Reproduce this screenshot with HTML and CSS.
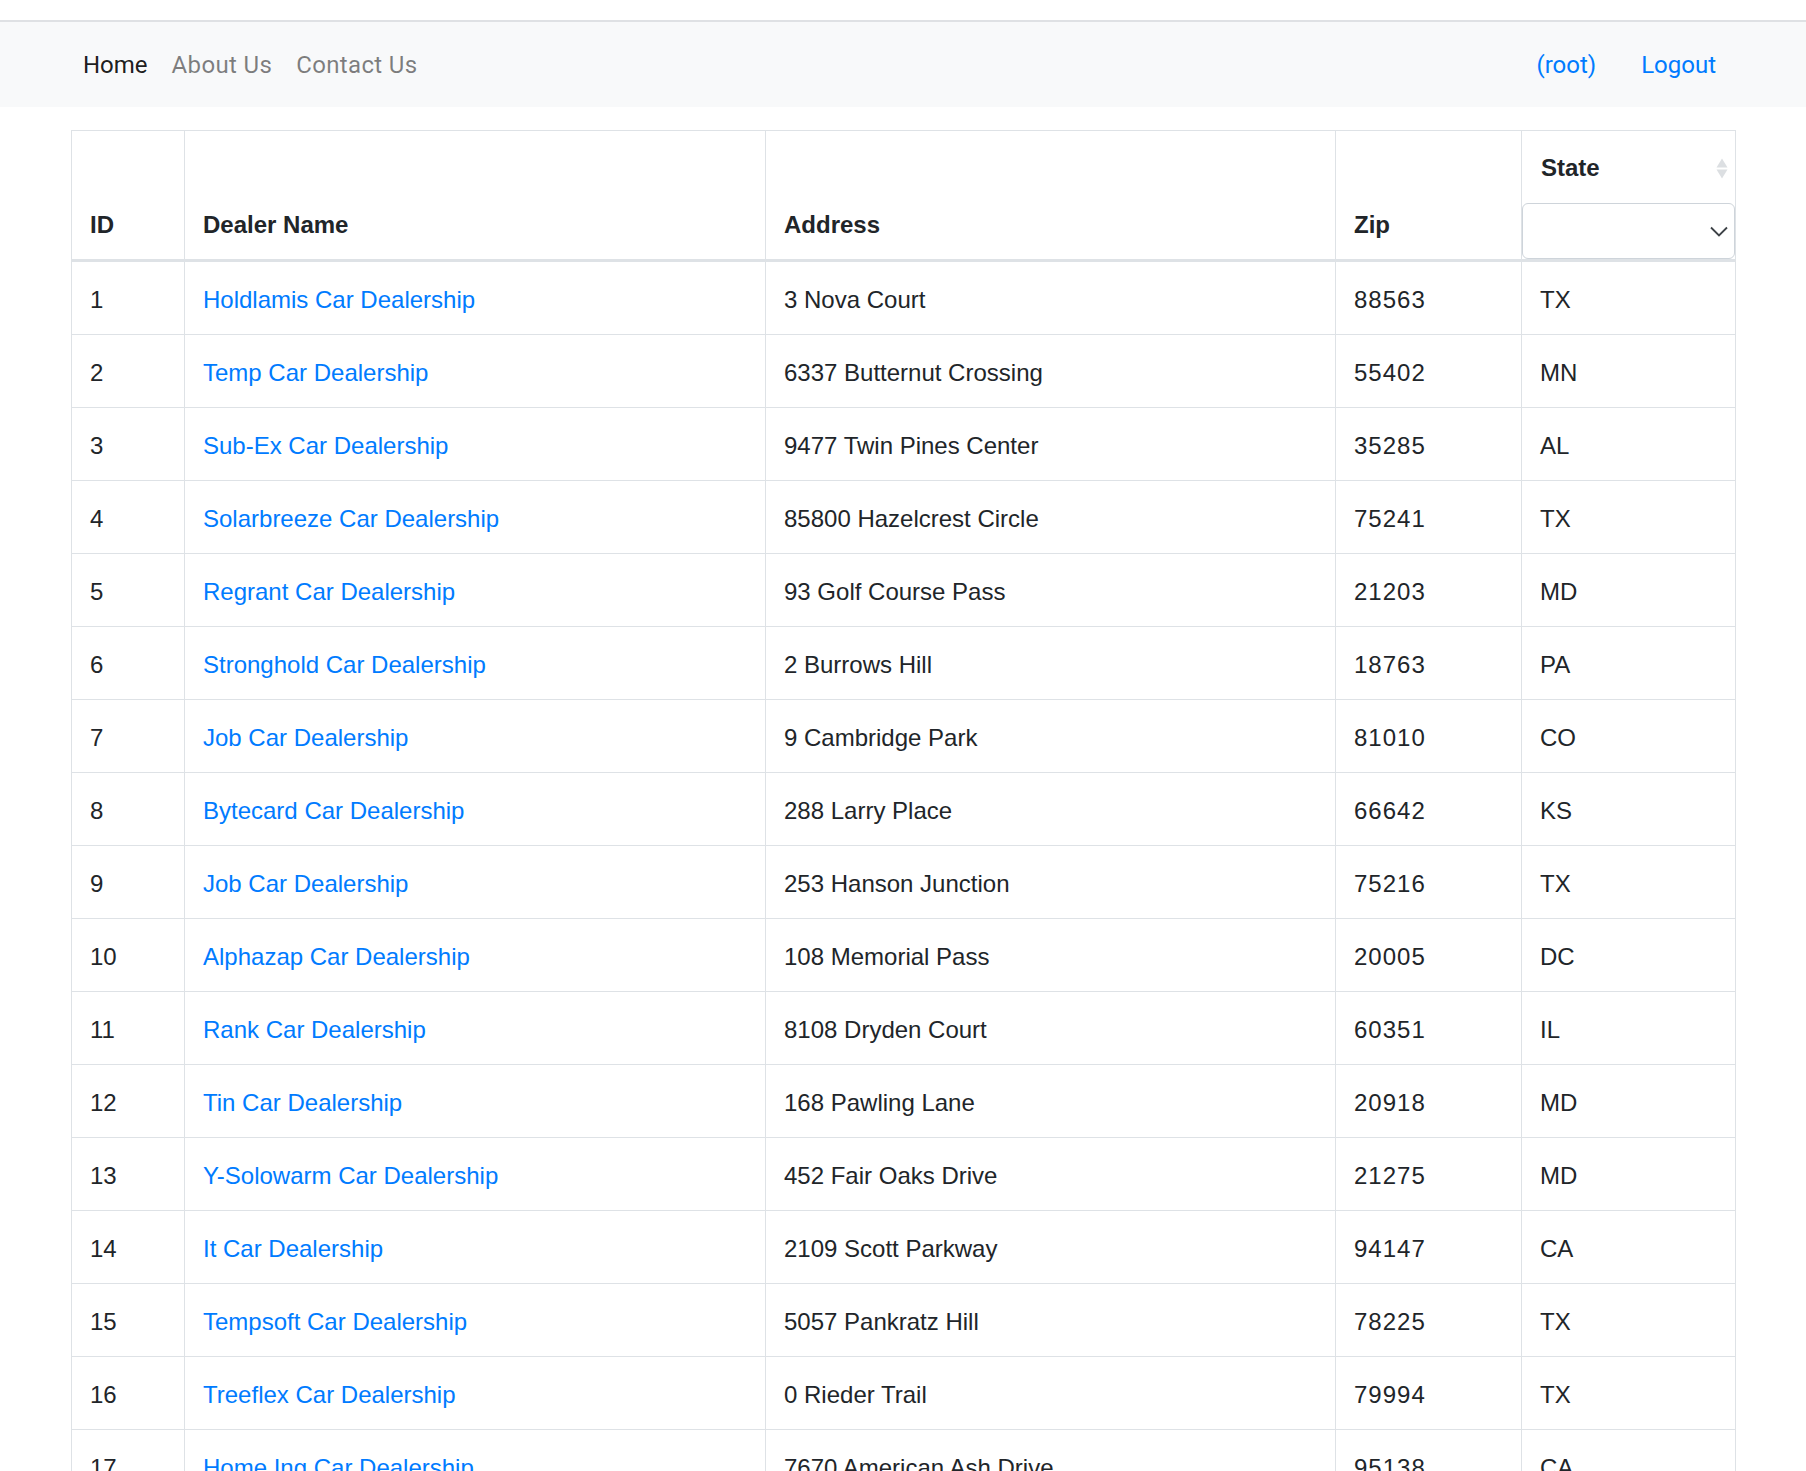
FILE: index.html
```html
<!DOCTYPE html>
<html lang="en">
<head>
<meta charset="utf-8">
<title>Dealerships</title>
<link rel="stylesheet" href="styles.css">
</head>
<body>
<div class="topstrip"></div>
<nav class="navbar">
  <ul class="nav-left">
    <li><a class="nav-link active" href="#">Home</a></li>
    <li><a class="nav-link" href="#">About Us</a></li>
    <li><a class="nav-link" href="#">Contact Us</a></li>
  </ul>
  <div class="nav-right">
    <a class="user-link" href="#">(root)</a>
    <a class="logout-link" href="#">Logout</a>
  </div>
</nav>
<main class="content">
  <table class="dealers">
    <colgroup>
      <col class="c-id"><col class="c-name"><col class="c-addr"><col class="c-zip"><col class="c-state">
    </colgroup>
    <thead>
      <tr>
        <th>ID</th>
        <th>Dealer Name</th>
        <th>Address</th>
        <th>Zip</th>
        <th class="state-th">
          <div class="state-label">
            <span>State</span>
            <svg class="sort-icon" width="12" height="21" viewBox="0 0 12 21"><path d="M6 0.5 L11.5 9.5 L0.5 9.5 Z" fill="#dcdfe2"/><path d="M6 20.5 L11.5 11.5 L0.5 11.5 Z" fill="#dcdfe2"/></svg>
          </div>
          <div class="select-wrap">
            <select class="state-select" aria-label="State filter"><option value=""></option></select>
            <svg class="chevron" width="18" height="11" viewBox="0 0 18 11"><path d="M1 1.5 L9 9.5 L17 1.5" fill="none" stroke="#3d4247" stroke-width="1.8"/></svg>
          </div>
        </th>
      </tr>
    </thead>
    <tbody>
      <tr><td>1</td><td><a href="#">Holdlamis Car Dealership</a></td><td>3 Nova Court</td><td class="num">88563</td><td>TX</td></tr>
      <tr><td>2</td><td><a href="#">Temp Car Dealership</a></td><td>6337 Butternut Crossing</td><td class="num">55402</td><td>MN</td></tr>
      <tr><td>3</td><td><a href="#">Sub-Ex Car Dealership</a></td><td>9477 Twin Pines Center</td><td class="num">35285</td><td>AL</td></tr>
      <tr><td>4</td><td><a href="#">Solarbreeze Car Dealership</a></td><td>85800 Hazelcrest Circle</td><td class="num">75241</td><td>TX</td></tr>
      <tr><td>5</td><td><a href="#">Regrant Car Dealership</a></td><td>93 Golf Course Pass</td><td class="num">21203</td><td>MD</td></tr>
      <tr><td>6</td><td><a href="#">Stronghold Car Dealership</a></td><td>2 Burrows Hill</td><td class="num">18763</td><td>PA</td></tr>
      <tr><td>7</td><td><a href="#">Job Car Dealership</a></td><td>9 Cambridge Park</td><td class="num">81010</td><td>CO</td></tr>
      <tr><td>8</td><td><a href="#">Bytecard Car Dealership</a></td><td>288 Larry Place</td><td class="num">66642</td><td>KS</td></tr>
      <tr><td>9</td><td><a href="#">Job Car Dealership</a></td><td>253 Hanson Junction</td><td class="num">75216</td><td>TX</td></tr>
      <tr><td>10</td><td><a href="#">Alphazap Car Dealership</a></td><td>108 Memorial Pass</td><td class="num">20005</td><td>DC</td></tr>
      <tr><td>11</td><td><a href="#">Rank Car Dealership</a></td><td>8108 Dryden Court</td><td class="num">60351</td><td>IL</td></tr>
      <tr><td>12</td><td><a href="#">Tin Car Dealership</a></td><td>168 Pawling Lane</td><td class="num">20918</td><td>MD</td></tr>
      <tr><td>13</td><td><a href="#">Y-Solowarm Car Dealership</a></td><td>452 Fair Oaks Drive</td><td class="num">21275</td><td>MD</td></tr>
      <tr><td>14</td><td><a href="#">It Car Dealership</a></td><td>2109 Scott Parkway</td><td class="num">94147</td><td>CA</td></tr>
      <tr><td>15</td><td><a href="#">Tempsoft Car Dealership</a></td><td>5057 Pankratz Hill</td><td class="num">78225</td><td>TX</td></tr>
      <tr><td>16</td><td><a href="#">Treeflex Car Dealership</a></td><td>0 Rieder Trail</td><td class="num">79994</td><td>TX</td></tr>
      <tr><td>17</td><td><a href="#">Home Ing Car Dealership</a></td><td>7670 American Ash Drive</td><td class="num">95138</td><td>CA</td></tr>
    </tbody>
  </table>
</main>
</body>
</html>
```
FILE: styles.css
```css
* { box-sizing: border-box; }
html, body { margin: 0; padding: 0; background: #ffffff; }
body {
  font-family: "Liberation Sans", Arial, sans-serif;
  font-size: 24px;
  line-height: 36px;
  color: #212529;
}
.topstrip {
  height: 22px;
  border-bottom: 2px solid #dfe1e4;
  background: #ffffff;
}
.navbar {
  height: 85px;
  background: #f8f9fa;
  display: flex;
  align-items: center;
  justify-content: space-between;
  padding: 1px 78px 0 71px;
  font-family: Roboto, "Liberation Sans", sans-serif;
}
.nav-left {
  display: flex;
  list-style: none;
  margin: 0;
  padding: 0;
}
.nav-link {
  display: block;
  padding: 12px 12px;
  color: rgba(0, 0, 0, 0.5);
  text-decoration: none;
  letter-spacing: 0.35px;
}
.nav-link.active { color: rgba(0, 0, 0, 0.9); letter-spacing: 0; }
.nav-right { display: flex; align-items: center; }
.user-link, .logout-link {
  color: #007bff;
  text-decoration: none;
  padding: 12px 12px;
}
.user-link { margin-right: 21px; }
.content { padding: 23px 71px 0 71px; }
.dealers {
  width: 1664px;
  border-collapse: collapse;
  table-layout: fixed;
  border: 1px solid #dee2e6;
}
.c-id { width: 113px; }
.c-name { width: 581px; }
.c-addr { width: 570px; }
.c-zip { width: 186px; }
.c-state { width: 214px; }
.dealers th, .dealers td {
  border: 1px solid #dee2e6;
  padding: 20px 18px 16px 18px;
  text-align: left;
  white-space: nowrap;
}
.dealers th {
  vertical-align: bottom;
  font-weight: bold;
  border-bottom: 3px solid #dee2e6;
}
.dealers td { vertical-align: top; }
.dealers td.num { letter-spacing: 1px; }
.dealers a { color: #007bff; text-decoration: none; }
.dealers th.state-th { padding: 19px 0 0 0; }
.state-label {
  display: flex;
  align-items: center;
  justify-content: space-between;
  padding: 0 7px 0 19px;
  margin-bottom: 17px;
}
.sort-icon { display: block; }
.select-wrap { position: relative; height: 56px; }
.state-select {
  display: block;
  width: 100%;
  height: 56px;
  margin: 0;
  border: 1px solid #ced4da;
  border-radius: 6px;
  background: #ffffff;
  appearance: none;
  -webkit-appearance: none;
  font-size: 24px;
}
.chevron {
  position: absolute;
  right: 7px;
  top: 23px;
  pointer-events: none;
}
```
